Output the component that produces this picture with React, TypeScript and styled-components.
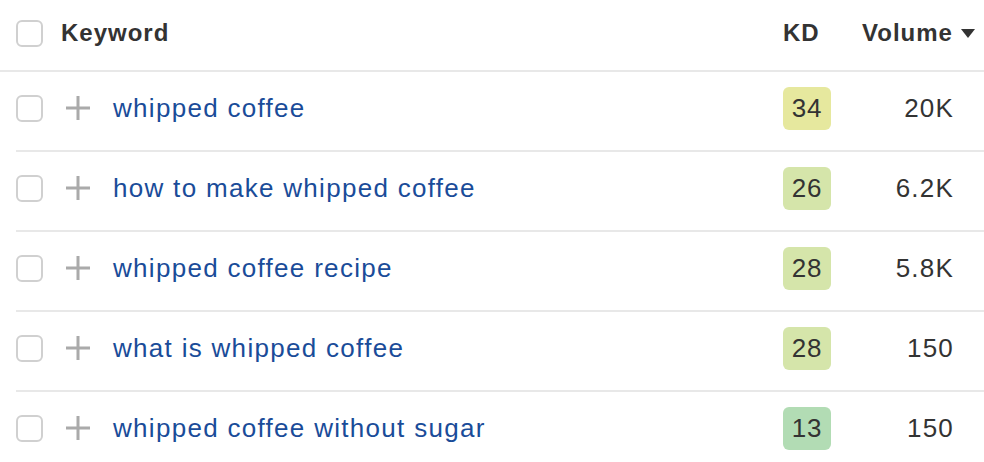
import React from "react";
import styled, { createGlobalStyle } from "styled-components";

const Global = createGlobalStyle`
  html, body { margin: 0; padding: 0; background: #fff; }
  body { font-family: "Liberation Sans", Arial, Helvetica, sans-serif; color: #333; }
`;

const Table = styled.div`
  width: 984px;
  height: 462px;
  overflow: hidden;
  background: #fff;
`;

const HeaderRow = styled.div`
  display: flex;
  align-items: center;
  box-sizing: border-box;
  height: 72px;
  padding: 0 8px 4px 16px;
  border-bottom: 2px solid #e8e8e8;
`;

const Row = styled.div`
  display: flex;
  align-items: center;
  box-sizing: border-box;
  height: 80px;
  margin-left: 16px;
  padding: 0 30px 6px 0;
  border-bottom: 2px solid #e8e8e8;
`;

const Checkbox = styled.span`
  box-sizing: border-box;
  width: 27px;
  height: 27px;
  flex: none;
  border: 2px solid #d0d0d0;
  border-radius: 6px;
  background: #fff;
`;

const HeadLabel = styled.span`
  font-size: 24px;
  font-weight: 700;
  color: #333;
  letter-spacing: 1px;
`;

const KeywordHead = styled(HeadLabel)`
  margin-left: 18px;
  flex: 1;
`;

const KDHead = styled(HeadLabel)`
  width: 79px;
  flex: none;
`;

const VolumeHead = styled(HeadLabel)`
  width: 114px;
  flex: none;
  display: flex;
  align-items: center;
  gap: 8px;
`;

const Plus = styled.svg`
  width: 24px;
  height: 24px;
  margin-left: 23px;
  flex: none;
`;

const Keyword = styled.a`
  flex: 1;
  margin-left: 23px;
  font-size: 26px;
  color: #1a4c99;
  text-decoration: none;
  letter-spacing: 1.3px;
`;

const Badge = styled.span<{ $bg: string }>`
  width: 48px;
  height: 43px;
  flex: none;
  display: flex;
  align-items: center;
  justify-content: center;
  border-radius: 6px;
  background: ${(p) => p.$bg};
  font-size: 26px;
  letter-spacing: 0.8px;
  color: #333;
`;

const Volume = styled.span`
  width: 123px;
  flex: none;
  text-align: right;
  font-size: 26px;
  color: #333;
  letter-spacing: 1.2px;
`;

const kdColor = (kd: number) => {
  if (kd <= 20) return "#b2dcb4";
  if (kd <= 30) return "#d5e5aa";
  return "#e6e89e";
};

const rows = [
  { kw: "whipped coffee", kd: 34, vol: "20K" },
  { kw: "how to make whipped coffee", kd: 26, vol: "6.2K" },
  { kw: "whipped coffee recipe", kd: 28, vol: "5.8K" },
  { kw: "what is whipped coffee", kd: 28, vol: "150" },
  { kw: "whipped coffee without sugar", kd: 13, vol: "150" },
];

export default function App() {
  return (
    <>
      <Global />
      <Table>
        <HeaderRow>
          <Checkbox />
          <KeywordHead>Keyword</KeywordHead>
          <KDHead>KD</KDHead>
          <VolumeHead>
            Volume
            <svg width="14" height="9" viewBox="0 0 14 9">
              <path d="M0 0h14L7 9z" fill="#333" />
            </svg>
          </VolumeHead>
        </HeaderRow>
        {rows.map((r) => (
          <Row key={r.kw}>
            <Checkbox />
            <Plus viewBox="0 0 24 24">
              <path d="M12 0v24M0 12h24" stroke="#aaa" strokeWidth="3" />
            </Plus>
            <Keyword href="#">{r.kw}</Keyword>
            <Badge $bg={kdColor(r.kd)}>{r.kd}</Badge>
            <Volume>{r.vol}</Volume>
          </Row>
        ))}
      </Table>
    </>
  );
}
